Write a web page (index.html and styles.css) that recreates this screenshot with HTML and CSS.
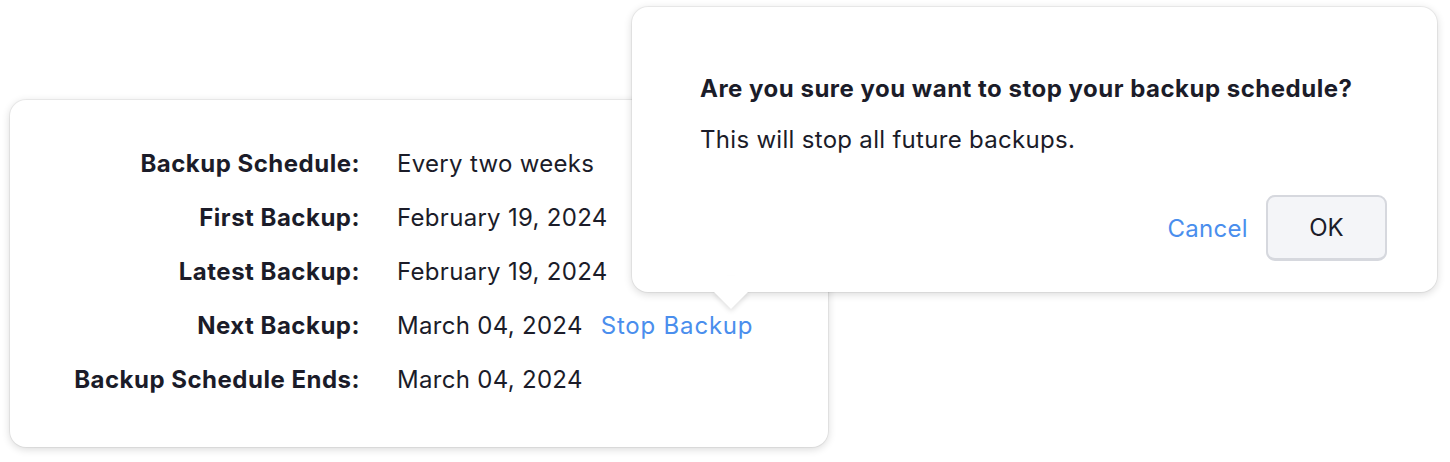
FILE: index.html
```html
<!DOCTYPE html>
<html lang="en">
<head>
<meta charset="utf-8">
<title>Backup schedule</title>
<link rel="stylesheet" href="styles.css">
</head>
<body>
<div class="stage">
  <section class="card">
    <dl class="details">
      <dt>Backup Schedule:</dt>
      <dd>Every two weeks</dd>
      <dt>First Backup:</dt>
      <dd>February 19, 2024</dd>
      <dt>Latest Backup:</dt>
      <dd>February 19, 2024</dd>
      <dt>Next Backup:</dt>
      <dd>March 04, 2024 <a class="link stop" href="#">Stop Backup</a></dd>
      <dt>Backup Schedule Ends:</dt>
      <dd>March 04, 2024</dd>
    </dl>
  </section>
  <div class="popover" role="dialog">
    <h2 class="pop-title">Are you sure you want to stop your backup schedule?</h2>
    <p class="pop-text">This will stop all future backups.</p>
    <div class="pop-actions">
      <a class="link cancel" href="#">Cancel</a>
      <button class="ok" type="button">OK</button>
    </div>
  </div>
</div>
</body>
</html>
```
FILE: styles.css
```css
* { box-sizing: border-box; }
html, body { margin: 0; padding: 0; background: #ffffff; }
body {
  font-family: Inter, "Noto Sans", "Liberation Sans", sans-serif;
  color: #1b1c29;
  width: 1450px;
  height: 462px;
  overflow: hidden;
}
.stage {
  position: relative;
  padding: 100px 0 0 10px;
}
.card {
  width: 818px;
  height: 347px;
  background: #fff;
  border-radius: 16px;
  box-shadow: 0 0 0 1px rgba(0,0,0,0.05), 0 2px 9px rgba(0,0,0,0.16);
  padding: 37px 0 0 0;
}
.details {
  margin: 0;
  display: grid;
  grid-template-columns: 350px 1fr;
  column-gap: 37px;
  font-size: 24px;
  line-height: 54px;
}
.details dt {
  text-align: right;
  font-weight: 700;
  letter-spacing: 0.5px;
}
.details dd {
  margin: 0;
  letter-spacing: 0.3px;
}
.link {
  color: #4a8eed;
  text-decoration: none;
}
.stop {
  margin-left: 11px;
  letter-spacing: 0.8px;
}
.popover {
  position: absolute;
  left: 632px;
  top: 7px;
  width: 805px;
  height: 285px;
  background: #fff;
  border-radius: 16px;
  box-shadow: 0 0 0 1px rgba(0,0,0,0.05), 0 2px 9px rgba(0,0,0,0.16);
  padding: 65px 50px 0 68px;
}
.popover::before {
  content: "";
  position: absolute;
  left: 87px;
  bottom: -12px;
  width: 24px;
  height: 24px;
  background: #fff;
  transform: rotate(45deg);
  box-shadow: 2px 2px 5px rgba(0,0,0,0.12);
}
.popover::after {
  content: "";
  position: absolute;
  left: 70px;
  bottom: 0;
  width: 60px;
  height: 16px;
  background: #fff;
}
.pop-title {
  margin: 0;
  font-size: 24px;
  font-weight: 700;
  line-height: 34px;
  letter-spacing: 0.5px;
}
.pop-text {
  margin: 17px 0 0;
  font-size: 24px;
  line-height: 34px;
  letter-spacing: 0.3px;
}
.pop-actions {
  position: relative;
  z-index: 1;
  margin-top: 38px;
  display: flex;
  justify-content: flex-end;
  align-items: center;
  gap: 18px;
  font-size: 24px;
  letter-spacing: 0.3px;
}
.ok {
  width: 121px;
  height: 66px;
  font: inherit;
  font-size: 24px;
  color: #1b1c29;
  background: #f4f5f8;
  border: 2px solid #d6d8de;
  border-bottom-width: 3px;
  border-radius: 9px;
}
```
